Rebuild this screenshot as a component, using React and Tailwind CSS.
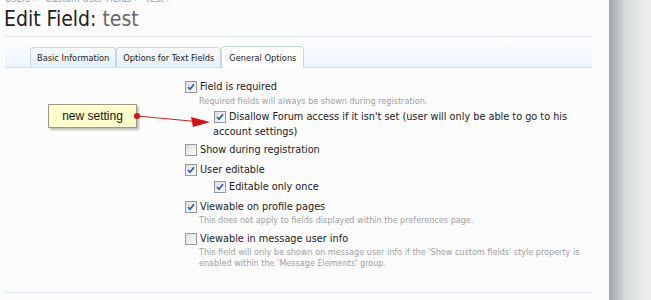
import React from "react";

const font = { fontFamily: '"DejaVu Sans Condensed", "DejaVu Sans", Verdana, sans-serif' };

function Box({ checked }) {
  return (
    <svg width="12" height="12" viewBox="0 0 12 12" className="shrink-0">
      <defs>
        <linearGradient id="cbg" x1="0" y1="0" x2="1" y2="1">
          <stop offset="0" stopColor="#dcdcdc" />
          <stop offset="1" stopColor="#ffffff" />
        </linearGradient>
      </defs>
      <rect x="0.5" y="0.5" width="11" height="11" fill="url(#cbg)" stroke="#8f9aa3" />
      {checked && (
        <path d="M3 6 L5 8.3 L9 3.2" fill="none" stroke="#2a55b8" strokeWidth="1.6" />
      )}
    </svg>
  );
}

function Row({ checked, children, className = "" }) {
  return (
    <div className={`flex items-center gap-[3px] h-[14px] text-[10.8px] text-[#222] ${className}`}>
      <Box checked={checked} />
      <span className="leading-[14px]">{children}</span>
    </div>
  );
}

function Desc({ children, className = "" }) {
  return (
    <div className={`pl-[14px] text-[9px] text-[#a0a0a0] ${className}`}>{children}</div>
  );
}

function Tab({ children, active }) {
  return (
    <div
      className={
        active
          ? "h-[22px] px-[7px] flex items-center text-[9.2px] text-[#222] bg-white border border-[#c7d6e3] border-b-0 rounded-t-[4px] -mb-px"
          : "h-[20px] px-[6px] flex items-center text-[9.2px] text-[#222] bg-gradient-to-b from-[#f7fbfe] to-[#e6f0f8] border border-[#c7d6e3] border-b-0 rounded-t-[4px]"
      }
    >
      {children}
    </div>
  );
}

export default function App() {
  return (
    <div className="w-[651px] h-[300px] flex overflow-hidden bg-[#ededed]" style={font}>
      <div className="relative w-[609px] h-[300px] bg-[#fcfcfd] overflow-hidden">
        <div className="pl-[5px] mt-[-7px] h-[11px] text-[10px] text-[#8aa0b5] leading-[11px]">
          Users › &nbsp; Custom User Fields › &nbsp; test ›
        </div>
        <div className="pl-[4px] mt-[6px] h-[18px] leading-[18px] text-[21px] text-[#222]">
          Edit Field: <span className="text-[#666]">test</span>
        </div>
        <div className="ml-[5px] w-[587px] mt-[8px] border-t border-[#dbe6ef]" />
        <div className="ml-[5px] w-[587px] mt-[3px] h-[28px] bg-gradient-to-b from-[#fdfeff] to-[#eef5fb] border-b border-[#d3e0eb] flex items-end pl-[25px]">
          <Tab>Basic Information</Tab>
          <Tab>Options for Text Fields</Tab>
          <Tab active>General Options</Tab>
        </div>

        <div className="pl-[185px] mt-[12px]">
          <Row checked>Field is required</Row>
          <Desc className="h-[12px] leading-[12px] mt-[1px]">
            Required fields will always be shown during registration.
          </Desc>
          <div className="pl-[29px] mt-[2px] text-[10.8px] text-[#222] leading-[15px]">
            <div className="flex items-center gap-[3px]">
              <Box checked />
              <span>Disallow Forum access if it isn't set (user will only be able to go to his</span>
            </div>
            <div className="-ml-[1px]">account settings)</div>
          </div>
          <Row className="mt-[4px]">Show during registration</Row>
          <Row checked className="mt-[6px]">User editable</Row>
          <Row checked className="mt-[3px] pl-[29px]">Editable only once</Row>
          <Row checked className="mt-[6px]">Viewable on profile pages</Row>
          <Desc className="h-[12px] leading-[12px] mt-[0px]">
            This does not apply to fields displayed within the preferences page.
          </Desc>
          <Row className="mt-[6px]">Viewable in message user info</Row>
          <Desc className="mt-[1px] leading-[11px]">
            This field will only be shown on message user info if the 'Show custom fields' style property is
            <br />
            enabled within the 'Message Elements' group.
          </Desc>
        </div>

        <div className="absolute left-[5px] top-[292px] w-[587px] border-t border-[#d6e6ee]" />

        {/* callout */}
        <div
          className="absolute left-[48px] top-[104px] w-[89px] h-[24px] bg-[#ffffcc] border border-[#9a9a8a] shadow-[2px_2px_2px_rgba(0,0,0,0.25)] flex items-center justify-center text-[12px] text-[#111]"
          style={{ fontFamily: '"Liberation Sans", Arial, sans-serif' }}
        >
          new setting
        </div>
        <svg className="absolute left-[130px] top-[108px]" width="90" height="24" viewBox="0 0 90 24">
          <line x1="7" y1="8" x2="66" y2="13.5" stroke="#d42020" strokeWidth="1" />
          <path d="M80 14 L61 9 L63 19 Z" fill="#d41010" />
          <circle cx="7" cy="8" r="3" fill="#d41010" />
        </svg>
      </div>
      <div className="w-[42px] h-[300px] bg-gradient-to-r from-[#9aa5aa] via-[#d9dcdd] via-40% to-[#efefef]" />
    </div>
  );
}
